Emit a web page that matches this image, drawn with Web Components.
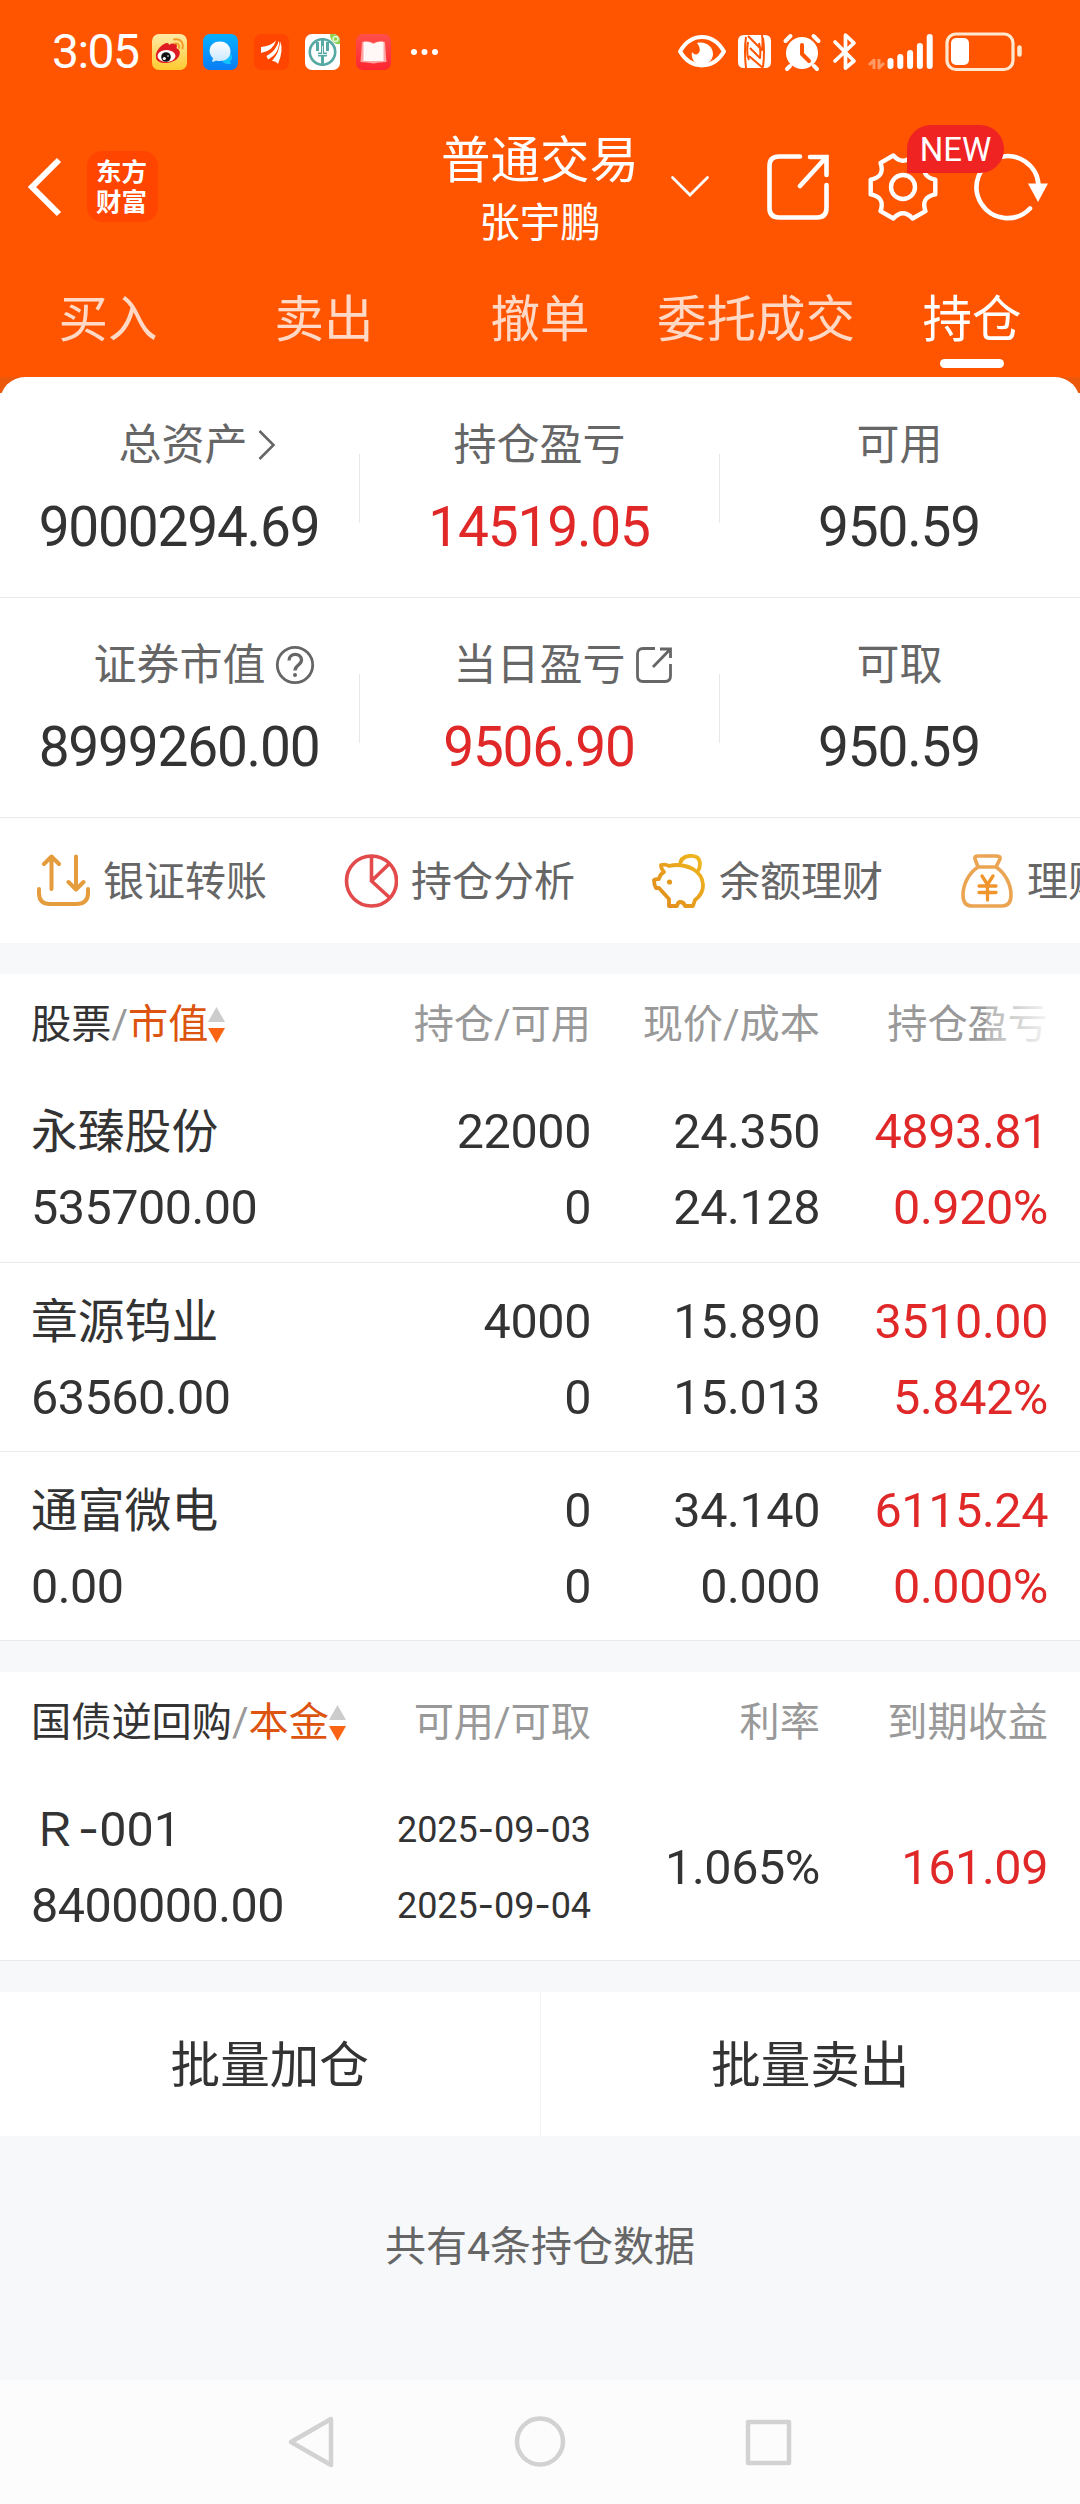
<!DOCTYPE html>
<html lang="zh-CN">
<head>
<meta charset="utf-8">
<title>普通交易 - 持仓</title>
<style>
html,body{margin:0;padding:0}
body{width:1080px;background:#f7f8fa;font-family:Roboto,"Noto Sans CJK SC",sans-serif;color:#333;overflow-x:hidden}
</style>
</head>
<body>
<trade-app></trade-app>
<script>
const define = (name, html) => {
  const tpl = document.createElement('template');
  tpl.innerHTML = html;
  customElements.define(name, class extends HTMLElement {
    constructor() {
      super();
      this.attachShadow({ mode: 'open' }).appendChild(tpl.content.cloneNode(true));
    }
  });
};

define('status-bar', `
<style>
:host{display:flex;height:104px;box-sizing:border-box;padding:0 57px 0 52px;align-items:center;justify-content:space-between;color:#fff}
.l,.r{display:flex;align-items:center}
.t{font-size:48px;line-height:52px;letter-spacing:-1.500px;width:100px;white-space:nowrap}
.apps{display:flex;gap:16px;margin-right:19px}
svg{display:block;flex:none}
</style>
<div class="l"><span class="t">3:05</span>
<div class="apps">
<svg width="35" height="36" viewBox="0 0 35 36"><defs><linearGradient id="y" x2="0" y2="1"><stop stop-color="#ffeaa6"/><stop offset="1" stop-color="#ffcb30"/></linearGradient></defs><rect width="35" height="36" rx="7" fill="url(#y)"/><path d="M4 23C3 18 8 12 12 10c3-2 5-1 5 1 3-2 8-2 8 1-1 2 0 3 1 3 4 3 2 13-12 14C8 29 4 27 4 23z" fill="#e01a22"/><ellipse cx="14.500" cy="22" rx="9" ry="6" fill="#fff"/><circle cx="14" cy="23" r="4.800" fill="#111"/><circle cx="12.300" cy="24.500" r="1.600" fill="#fff"/><circle cx="16" cy="22" r=".8" fill="#fff"/><path d="M22 5.500c6-1.500 10 3 8.500 9M23 9.500c3-.5 5 1.500 4 4.500" fill="none" stroke="#f29a25" stroke-width="1.900" stroke-linecap="round"/></svg>
<svg width="35" height="36" viewBox="0 0 35 36"><defs><linearGradient id="b" x2="0" y2="1"><stop stop-color="#08b0ff"/><stop offset="1" stop-color="#0a7cf5"/></linearGradient><linearGradient id="w" x2="0" y2="1"><stop stop-color="#fff"/><stop offset="1" stop-color="#c9e8ff"/></linearGradient></defs><rect width="35" height="36" rx="7" fill="url(#b)"/><path d="M28 20c2 3 1 6-1 7l1 3c-4 0-8 0-9-4z" fill="#12c2ff"/><path d="M17 7.500c6.500 0 10.500 4.500 10.500 10S23.500 27 17 27c-2 0-3 0-4-.5-1 1-2.500 1.500-4 1l1-3.500C4 19 6 7.500 17 7.500z" fill="url(#w)"/></svg>
<svg width="35" height="36" viewBox="0 0 35 36"><rect width="35" height="36" rx="7" fill="#ff4500"/><path d="M7 13Q17 12 22 6.500 19 17 7 19zM12.500 22Q22 17 25 6.500 26 19 14 25.500zM18 27Q26 18 26 7q4 9-2 23-2-3-6-3z" fill="#fff"/></svg>
<svg width="35" height="36" viewBox="0 0 35 36"><rect width="35" height="36" rx="7" fill="#fff"/><path d="M25 0h3a7 7 0 0 1 7 7v3C29 11 25 6 25 0z" fill="#8fd14f"/><circle cx="30.500" cy="5" r="2.500" fill="none" stroke="#e8ffe0" stroke-width="1.300"/><circle cx="17.500" cy="18" r="12.700" fill="none" stroke="#57a9a3" stroke-width="2.600"/><path d="M17.500 4v28M12.500 8v9M22.500 8v9" stroke="#57a9a3" stroke-width="3"/><path d="M13 18.500h9v4h-9z" fill="#57a9a3"/><path d="M17.500 12v8.500M13 20.500h9" stroke="#fff" stroke-width=".8"/></svg>
<svg width="35" height="36" viewBox="0 0 35 36"><defs><linearGradient id="r" x2="0" y2="1"><stop stop-color="#ff504b"/><stop offset="1" stop-color="#fc2530"/></linearGradient></defs><rect width="35" height="36" rx="7" fill="url(#r)"/><path d="M6 8q6-2 11.500 1Q23 6 29 8l1.500 20q-7 0-13 1.500Q11 28 4.500 28z" fill="#ffa3a0"/><path d="M7.500 8q5-1 10 2 5-3 10-2v19h-20z" fill="#fff8f7"/></svg>
</div>
<svg width="29" height="8" viewBox="0 0 29 8"><g fill="#fff"><circle cx="4" cy="4" r="3"/><circle cx="14.500" cy="4" r="3"/><circle cx="25" cy="4" r="3"/></g></svg>
</div>
<svg width="346" height="42" viewBox="677 31 346 42" fill="none" stroke="#fff" stroke-linecap="round" stroke-linejoin="round">
<path d="M680 51.500C691 32 713 32 724 51.500 713 70 691 70 680 51.500z" stroke-width="4"/><path d="M697 43c9-2 16 4 16 11 0 5-4 9-9 11h-5c-6-3-8-8-7-13 4 6 12 0 5-9z" fill="#fff" stroke="none"/>
<path d="M744 35h21q6 0 6 6v21q0 6-6 6h-21q-6 0-6-6V41q0-6 6-6z" fill="#fff" stroke="none"/><path d="M746 37q-2 14 0 31M748 42q-2 12 1 18M750 48l10 10q1-8-1-15M748 36l14 14q1-8 0-15M749 56l14 12M763 67q2-15 0-29" stroke="#ff5500" stroke-width="2" stroke-linecap="butt"/>
<circle cx="802" cy="53" r="16" fill="#fff" stroke="none"/><path d="M785.500 41l5-5M818.500 41l-5-5M790 66l-3 3M814 66l3 3" stroke-width="4"/><path d="M802 45v9l7 7" stroke="#ff5500" stroke-width="4"/>
<path d="M835 42l19 19-8.500 7V35l8.500 8-19 18" stroke-width="3.700"/>
<path d="M874 69v-9l-5 5M879 59v9l5-5" stroke="#ff9a66" stroke-width="3" stroke-linecap="butt"/>
<path d="M890.500 61v5M900.300 57v9M910.100 53v13M919.900 46v20M929.700 37v29" stroke-width="6"/>
<rect x="947" y="34" width="66" height="35.500" rx="9" stroke="#ffe8d0" stroke-width="3.200"/><rect x="951" y="38" width="18" height="27" rx="5" fill="#fff" stroke="none"/><path d="M1019.500 47.500v7" stroke="#ffe8d0" stroke-width="4.500"/>
</svg>`);

define('trade-header', `
<style>
:host{display:grid;grid-template-columns:440px 200px 440px;height:166px;color:#fff}
.l{display:flex;align-items:center;padding:0 0 1px 27px;gap:25px}
.logo{width:71px;height:71px;border-radius:15px;background:#ff4500;display:flex;flex-direction:column;align-items:center;justify-content:center;font-size:25.500px;line-height:30.500px;font-weight:700;box-sizing:border-box;padding:1px 2px 0 0}
.m{display:flex;flex-direction:column;align-items:center;padding-top:23px;white-space:nowrap}
.a{font-size:49.500px;line-height:68px}
.b{font-size:40.500px;line-height:56px}
.r{display:flex;align-items:center;padding-left:29px}
.g{position:relative;margin-left:37px;height:74px}
.n{position:absolute;left:41px;top:-25px;width:97px;height:48px;border-radius:24px 24px 24px 0;background:#f02323;font-size:33px;line-height:49px;text-align:center;z-index:1}
svg{display:block;flex:none}
</style>
<div class="l">
<svg width="35" height="60" viewBox="0 0 35 60" fill="none" stroke="#fff" stroke-width="6"><path d="M32 3L5 30l27 27"/></svg>
<div class="logo"><span>东方</span><span>财富</span></div>
</div>
<div class="m"><span class="a">普通交易</span><span class="b">张宇鹏</span></div>
<div class="r">
<svg width="42" height="24" viewBox="0 0 42 24" fill="none" stroke="#fff" stroke-width="2.800" stroke-linecap="round"><path d="M3.500 2.500L21 20 38.500 2.500"/></svg>
<svg style="margin-left:56px" width="62" height="68" viewBox="0 0 62 68" fill="none" stroke="#fff" stroke-width="4.600" stroke-linecap="round"><path d="M33 3.500H12q-9.500 0-9.500 9.500v42q0 9.500 9.500 9.500h38q9.500 0 9.500-9.500V32M43 4h16.500v18M59 4.500L33 33"/></svg>
<div class="g"><svg width="74" height="74" viewBox="-37 -37 74 74" fill="none" stroke="#fff" stroke-width="4.400" stroke-linejoin="round"><path d="M-9.600-31.500Q0-21 9.600-31.500L22.500-24.200Q17.500-10.200 32.300-7.400V7.400Q17.500 10.200 22.500 24.200L9.600 31.500Q0 21-9.600 31.500L-22.500 24.200Q-17.500 10.200-32.300 7.400V-7.400Q-17.500-10.200-22.500-24.200z"/><circle r="12"/></svg><span class="n">NEW</span></div>
<svg style="margin-left:34px" width="76" height="70" viewBox="0 0 76 70" fill="none" stroke="#fff" stroke-width="4.600" stroke-linecap="round"><path d="M64.500 33A31 31 0 1 0 56 56.500"/><path d="M54 31.500h20L64 50z" fill="#fff" stroke="none"/></svg>
</div>`);

define('trade-tabs', `
<style>:host{display:flex;height:107px}</style><slot></slot>`);
define('trade-tab', `
<style>
:host{display:flex;flex-direction:column;align-items:center;width:216px;font-size:49.500px;line-height:72px;color:#ffd9c6;padding-top:14px;box-sizing:border-box;white-space:nowrap}
:host([active]){color:#fff}
i{display:none;width:64px;height:9px;border-radius:4.500px;background:#fff;margin-top:3px}
:host([active]) i{display:block}
</style><slot></slot><i></i>`);

define('stat-row', `
<style>
:host{display:flex;height:220px;box-sizing:border-box;padding-top:40px;border-bottom:1px solid #ebebeb}
:host([first]){height:221px;padding-top:41px}
</style><slot></slot>`);
define('stat-cell', `
<style>
:host{display:flex;flex-direction:column;align-items:center;width:360px;position:relative;color:#333}
:host([up]){color:#e02828}
.l{font-size:43px;line-height:54px;color:#666;display:flex;align-items:center;margin-left:-1px}
.i{width:0;display:flex;overflow:visible}
.v{font-size:55px;line-height:56px;letter-spacing:-1.200px;margin:27px 0 0 -2px}
.d{position:absolute;right:0;top:36px;width:1px;height:69px;background:#e8e8e8}
:host([last]) .d{display:none}
</style><div class="l"><slot name="label"></slot><span class="i"><slot name="icon"></slot></span></div><div class="v"><slot></slot></div><div class="d"></div>`);

define('quick-actions', `
<style>:host{display:flex;height:125px;gap:76px;padding-left:36px;overflow:hidden}</style><slot></slot>`);
define('quick-action', `
<style>
:host{display:flex;flex:none;align-items:center;gap:13px;font-size:41px;line-height:60px;color:#666;width:232px;white-space:nowrap}
.t{padding-top:2px}
::slotted(svg){display:block;flex:none}
</style><slot name="icon"></slot><span class="t"><slot></slot></span>`);

define('page-gap', `<style>:host{display:block;height:31px;background:#f7f8fa}</style>`);

const cols = 'display:grid;grid-template-columns:380px 180px 229px 228px;padding:0 32px 0 31px;box-sizing:border-box;';
define('table-head', `
<style>
:host{${cols}height:99px;align-items:center;font-size:40.200px;line-height:60px;color:#999;position:relative;white-space:nowrap}
.f{display:flex;align-items:center}
b{font-weight:400;color:#333}em{font-style:normal;color:#dc5410}
svg{display:block;margin-left:0}
.c{text-align:right}
.fade{display:none;position:absolute;left:986px;top:20px;width:64px;height:60px;background:linear-gradient(90deg,rgba(255,255,255,.25),rgba(255,255,255,.92))}
:host([fade]) .fade{display:block}
.c,.f{padding-top:3px}
</style>
<div class="f"><b><slot name="kind"></slot></b>/<em><slot name="sort"></slot></em><svg width="17" height="38" viewBox="0 0 17 38"><path d="M8.500 1L17 16H0z" fill="#ccc"/><path d="M8.500 37L17 22H0z" fill="#fa6414"/></svg></div>
<div class="c"><slot name="c2"></slot></div><div class="c"><slot name="c3"></slot></div><div class="c"><slot name="c4"></slot></div><div class="fade"></div>`);

define('holding-row', `
<style>
:host{${cols}height:189px;border-bottom:1px solid #ebebeb;padding-top:21px;font-size:48.500px;line-height:76px;letter-spacing:-.4px;white-space:nowrap}
:host([tall]){height:190px}
div{display:flex;flex-direction:column;align-items:flex-end;height:152px;justify-content:center}
.n{align-items:flex-start;letter-spacing:-.5px}
::slotted([slot=name]){font-size:46.800px;letter-spacing:0}
.p{color:#e02828}
:host([dates]) .q{font-size:36px;letter-spacing:-.1px}
</style>
<div class="n"><slot name="name"></slot><slot name="value"></slot></div>
<div class="q"><slot name="qty"></slot></div>
<div><slot name="price"></slot></div>
<div class="p"><slot name="profit"></slot></div>`);

define('wide-dash', `<style>:host{font-family:Inter,sans-serif;line-height:1px}</style><slot></slot>`);

define('batch-actions', `
<style>
:host{display:flex;height:144px;background:#fff}
div{flex:1;display:flex;align-items:center;justify-content:center;font-size:49.600px;line-height:70px;padding-top:4px;box-sizing:border-box}
div+div{border-left:1px solid #f3f4f6}
</style><div><slot name="buy"></slot></div><div><slot name="sell"></slot></div>`);

define('list-summary', `<style>:host{display:flex;height:244px;box-sizing:border-box;padding-top:81px;justify-content:center;font-size:41px;line-height:60px;color:#666}</style><slot></slot>`);

define('nav-bar', `
<style>:host{display:flex;height:124px;background:#fcfcfc;justify-content:center;gap:177px;align-items:center;box-sizing:border-box}svg{display:block}</style>
<svg width="52" height="54" viewBox="0 0 52 54" fill="none" stroke="#d2d2d2" stroke-width="4.500" stroke-linejoin="round"><path d="M46 4v46L6 27z"/></svg>
<svg width="52" height="54" viewBox="0 0 52 54" fill="none" stroke="#d2d2d2" stroke-width="4.500"><circle cx="26" cy="26.500" r="23"/></svg>
<svg width="52" height="54" viewBox="0 0 52 54" fill="none" stroke="#d2d2d2" stroke-width="4.500" stroke-linejoin="round"><path d="M5 7h41v41H5z"/></svg>`);

define('trade-app', `
<style>
:host{display:block;width:1080px;height:2504px;overflow:hidden;background:#f7f8fa}
.top{background:#ff5500;height:377px}
.corner{height:16px;background:#eb5809}
.panel{background:#fff;border-radius:25px 25px 0 0;margin-top:-16px}
</style>
<div class="top"><status-bar></status-bar><trade-header></trade-header>
<trade-tabs><trade-tab>买入</trade-tab><trade-tab>卖出</trade-tab><trade-tab>撤单</trade-tab><trade-tab>委托成交</trade-tab><trade-tab active>持仓</trade-tab></trade-tabs></div>
<div class="corner"></div>
<div class="panel">
<stat-row first>
<stat-cell><span slot="label" style="margin-left:7px">总资产</span><svg slot="icon" style="margin-left:9px;flex:none" width="20" height="32" viewBox="0 0 20 32" fill="none" stroke="#666" stroke-width="2.600"><path d="M2.500 2L16.500 16 2.500 30"/></svg>9000294.69</stat-cell>
<stat-cell up><span slot="label">持仓盈亏</span>14519.05</stat-cell>
<stat-cell last><span slot="label">可用</span>950.59</stat-cell>
</stat-row>
<stat-row>
<stat-cell><span slot="label">证券市值</span><svg slot="icon" style="margin-left:9px;flex:none" width="40" height="40" viewBox="0 0 40 40" fill="none" stroke="#666" stroke-width="2.800"><circle cx="20" cy="20" r="17.700"/><path d="M14 15.500c0-8 12.500-8 12.500-.5 0 5-6.500 5-6.500 10.500" stroke-width="3.300"/><circle cx="20" cy="30" r="2" fill="#666" stroke="none"/></svg>8999260.00</stat-cell>
<stat-cell up><span slot="label">当日盈亏</span><svg slot="icon" style="margin-left:9px;flex:none" width="38" height="38" viewBox="0 0 38 38" fill="none" stroke="#666" stroke-width="2.800"><path d="M20 2.500H8Q2.500 2.500 2.500 8v22q0 5.500 5.500 5.500h22q5.500 0 5.500-5.500V18M25 3h10.500v9M35.500 3L18 21"/></svg>9506.90</stat-cell>
<stat-cell last><span slot="label">可取</span>950.59</stat-cell>
</stat-row>
<quick-actions>
<quick-action><svg slot="icon" width="54" height="54" viewBox="0 0 54 54" fill="none" stroke="#e59c3c" stroke-width="4" stroke-linecap="round" stroke-linejoin="round"><path d="M3 35v4q0 11 11 11h26q12 0 12-11v-4M15.500 35V3M8 10l7.500-7.500L23 10M40 2.500v33M32.500 28l7.500 7.500 7.500-7.500"/></svg>银证转账</quick-action>
<quick-action><svg slot="icon" width="54" height="54" viewBox="0 0 54 54" fill="none" stroke="#e24a4c" stroke-width="3.600"><circle cx="27.500" cy="27" r="25"/><path d="M27.500 2v25l18 16.500M27.500 27L45 10"/></svg>持仓分析</quick-action>
<quick-action><svg slot="icon" width="54" height="54" viewBox="0 0 54 54" fill="none" stroke="url(#pg)" stroke-width="3.800" stroke-linejoin="round"><defs><linearGradient id="pg" x1="0" y1="1" x2="1" y2="0"><stop stop-color="#e08a1e"/><stop offset="1" stop-color="#f0b81e"/></linearGradient></defs><path d="M9 11q5-1 8 1 12-3 24 3c13 8 13 23 2 31l-2 6h-8q-1-4-5-4-2 0-3 4h-8v-7L7 34H4q-2-3-2-8 1-1 5-1 1-5 5-7-3-3-3-7zM28 12q0-9 9-10 10-1 11 7 0 6-3 9"/><circle cx="17.500" cy="28" r="2.600" fill="#e29a1e" stroke="none"/></svg>余额理财</quick-action>
<quick-action><svg slot="icon" width="54" height="54" viewBox="0 0 54 54" fill="none" stroke="#eba552" stroke-width="3.600" stroke-linejoin="round" stroke-linecap="round"><path d="M18 13l-3-8q-1-3 3-3h18q5 0 4 3l-4 8M18 13h18c9 6 15 17 15 28q0 11-9 11H12q-9 0-9-11c0-11 6-22 15-28z"/><path d="M22 22l5.500 8.500L33 22M27.500 31v15M19 32h17M19 38.500h17" stroke="#f0952c" stroke-width="3.300"/></svg>理财</quick-action>
</quick-actions>
<page-gap></page-gap>
<table-head fade><span slot="kind">股票</span><span slot="sort">市值</span><span slot="c2">持仓/可用</span><span slot="c3">现价/成本</span><span slot="c4">持仓盈亏</span></table-head>
<holding-row tall><span slot="name">永臻股份</span><span slot="value">535700.00</span><span slot="qty">22000</span><span slot="qty">0</span><span slot="price">24.350</span><span slot="price">24.128</span><span slot="profit">4893.81</span><span slot="profit">0.920%</span></holding-row>
<holding-row><span slot="name">章源钨业</span><span slot="value">63560.00</span><span slot="qty">4000</span><span slot="qty">0</span><span slot="price">15.890</span><span slot="price">15.013</span><span slot="profit">3510.00</span><span slot="profit">5.842%</span></holding-row>
<holding-row><span slot="name">通富微电</span><span slot="value">0.00</span><span slot="qty">0</span><span slot="qty">0</span><span slot="price">34.140</span><span slot="price">0.000</span><span slot="profit">6115.24</span><span slot="profit">0.000%</span></holding-row>
<page-gap></page-gap>
<table-head><span slot="kind">国债逆回购</span><span slot="sort">本金</span><span slot="c2">可用/可取</span><span slot="c3">利率</span><span slot="c4">到期收益</span></table-head>
<holding-row dates tall><span slot="name">Ｒ<wide-dash>-</wide-dash><span style="font-size:48.500px">001</span></span><span slot="value">8400000.00</span><span slot="qty">2025<wide-dash>-</wide-dash>09<wide-dash>-</wide-dash>03</span><span slot="qty">2025<wide-dash>-</wide-dash>09<wide-dash>-</wide-dash>04</span><span slot="price">1.065%</span><span slot="profit">161.09</span></holding-row>
<page-gap></page-gap>
<batch-actions><span slot="buy">批量加仓</span><span slot="sell">批量卖出</span></batch-actions>
</div>
<list-summary>共有4条持仓数据</list-summary>
<nav-bar></nav-bar>`);
</script>
</body>
</html>
